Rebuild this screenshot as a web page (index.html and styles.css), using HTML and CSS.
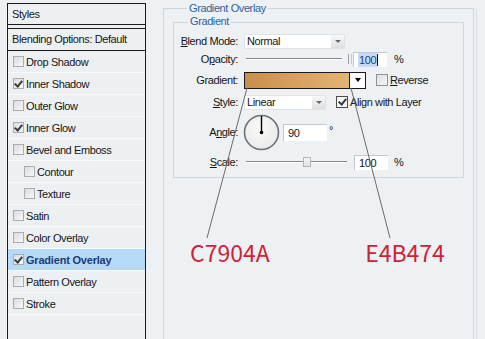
FILE: index.html
```html
<!DOCTYPE html>
<html lang="en">
<head>
    <meta charset="UTF-8">
    <title>Layer Style - Gradient Overlay</title>
    <link rel="stylesheet" href="styles.css">
</head>
<body>
    <aside class="styles-list">
        <div class="list-head">Styles</div>
        <div class="list-blend">Blending Options: Default</div>
        <div class="list-item"><span class="check"></span>Drop Shadow</div>
        <div class="list-item"><span class="check on"></span>Inner Shadow</div>
        <div class="list-item"><span class="check"></span>Outer Glow</div>
        <div class="list-item"><span class="check on"></span>Inner Glow</div>
        <div class="list-item"><span class="check"></span>Bevel and Emboss</div>
        <div class="list-item sub"><span class="check"></span>Contour</div>
        <div class="list-item sub"><span class="check"></span>Texture</div>
        <div class="list-item"><span class="check"></span>Satin</div>
        <div class="list-item"><span class="check"></span>Color Overlay</div>
        <div class="list-item active"><span class="check on"></span>Gradient Overlay</div>
        <div class="list-item"><span class="check"></span>Pattern Overlay</div>
        <div class="list-item"><span class="check"></span>Stroke</div>
    </aside>

    <main class="panel">
        <div class="group outer">
            <span class="legend">Gradient Overlay</span>
            <div class="group inner">
                <span class="legend">Gradient</span>
                <div class="rows">
                    <div class="row r-blend">
                        <span class="lbl"><u>B</u>lend Mode:</span>
                        <div class="select w-blend">Normal<span class="arrow"></span></div>
                    </div>
                    <div class="row r-opacity">
                        <span class="lbl">O<u>p</u>acity:</span>
                        <div class="track op"></div>
                        <div class="ticks"></div>
                        <div class="field op-field"><span class="sel">100</span><span class="caret"></span></div>
                        <span class="pct">%</span>
                    </div>
                    <div class="row r-gradient">
                        <span class="lbl">Gradient:</span>
                        <div class="swatch">
                            <div class="grad"></div>
                            <div class="swatch-arrow"></div>
                        </div>
                        <span class="cb rev"></span>
                        <span class="cb-label"><u>R</u>everse</span>
                    </div>
                    <div class="row r-style">
                        <span class="lbl"><u>S</u>tyle:</span>
                        <div class="select w-style">Linear<span class="arrow"></span></div>
                        <span class="cb align on"></span>
                        <span class="cb-label">Align with Layer</span>
                    </div>
                    <div class="row r-angle">
                        <span class="lbl">A<u>n</u>gle:</span>
                        <svg class="dial" width="37" height="37" viewBox="0 0 37 37">
                            <defs>
                                <radialGradient id="dialFill" cx="45%" cy="40%" r="60%">
                                    <stop offset="0" stop-color="#fbfbf8"/>
                                    <stop offset="1" stop-color="#e9ebea"/>
                                </radialGradient>
                            </defs>
                            <circle cx="18.5" cy="18.5" r="17" fill="url(#dialFill)" stroke="#6d7175" stroke-width="1.6"/>
                            <line x1="18.5" y1="18.5" x2="18.5" y2="2" stroke="#000" stroke-width="1.4"/>
                            <circle cx="18.5" cy="18.5" r="1.8" fill="#000"/>
                        </svg>
                        <div class="field angle-field">90</div>
                        <span class="deg">&deg;</span>
                    </div>
                    <div class="row r-scale">
                        <span class="lbl"><u>S</u>cale:</span>
                        <div class="track sc"><span class="thumb"></span></div>
                        <div class="field sc-field">100</div>
                        <span class="pct sc-pct">%</span>
                    </div>
                </div>
            </div>
            <div class="notes">
                <span class="note first">C7904A</span>
                <span class="note">E4B474</span>
            </div>
        </div>
    </main>

    <svg class="pointers" width="485" height="339" viewBox="0 0 485 339">
        <line x1="247" y1="88" x2="207" y2="238" stroke="#6a6a6a" stroke-width="1"/>
        <line x1="351" y1="88" x2="390" y2="238" stroke="#6a6a6a" stroke-width="1"/>
    </svg>
</body>
</html>
```

FILE: styles.css
```css
* {
    box-sizing: border-box;
}

body {
    margin: 0;
    width: 485px;
    height: 339px;
    overflow: hidden;
    position: relative;
    display: flex;
    align-items: flex-start;
    background: #eef1f4;
    font-family: "Liberation Sans", Arial, sans-serif;
    font-size: 11px;
    letter-spacing: -0.4px;
    color: #151515;
}

/* left column: list of effects */
.styles-list {
    flex-shrink: 0;
    width: 139px;
    height: 336px;
    margin: 3px 0 0 7px;
    border: 1px solid #1c1c1c;
    border-bottom: none;
    background: #edf0f3;
}

.list-head {
    height: 21px;
    padding-left: 4px;
    line-height: 20px;
    border-bottom: 1px solid #1c1c1c;
}

.list-blend {
    height: 23px;
    margin-top: 3px;
    padding-left: 4px;
    line-height: 21px;
    border-top: 1px solid #1c1c1c;
    border-bottom: 1px solid #1c1c1c;
}

.list-item {
    display: flex;
    align-items: center;
    height: 22px;
    padding-left: 5px;
    border-bottom: 1px solid #f8f9fa;
}

.list-item.sub {
    padding-left: 16px;
}

.list-item.active {
    background: #b6daf6;
    color: #1b3a78;
    font-weight: bold;
    letter-spacing: -0.2px;
}

.check {
    display: flex;
    align-items: center;
    justify-content: center;
    width: 11px;
    height: 11px;
    margin-right: 2px;
    border: 1px solid #a9adb1;
    background: linear-gradient(135deg, #dadcde, #f6f7f8);
}

.check.on::after,
.cb.on::after {
    content: "";
    width: 3px;
    height: 6px;
    margin-top: -2px;
    border-right: 2px solid #3a3a3a;
    border-bottom: 2px solid #3a3a3a;
    transform: rotate(40deg);
}

/* right column */
.panel {
    flex-shrink: 0;
    width: 314px;
    height: 331px;
    margin: 8px 0 0 17px;
    padding-right: 2px;
    border-right: 1px solid #dadee2;
}

.group {
    border: 1px solid #cfd5da;
}

.outer {
    height: 331px;
    padding: 0 9px;
    border-bottom: none;
}

.inner {
    margin-top: 7px;
    padding-bottom: 5px;
}

.legend {
    display: block;
    width: fit-content;
    margin: -7px 0 0 14px;
    padding: 0 2px;
    line-height: 13px;
    background: #eef1f4;
    color: #2c6397;
}

.inner .legend {
    margin-top: -8px;
}

.rows {
    margin-top: 4px;
}

.row {
    display: flex;
    align-items: center;
}

.r-blend { height: 18px; }
.r-opacity { height: 18px; }
.r-gradient { height: 24px; }
.r-style { height: 20px; }
.r-angle { height: 40px; }
.r-scale { height: 20px; }

.lbl {
    flex-shrink: 0;
    width: 64px;
    margin-right: 6px;
    text-align: right;
}

.select {
    display: flex;
    align-items: center;
    justify-content: space-between;
    height: 15px;
    padding-left: 2px;
    background: #fff;
    border: 1px solid #e1e4e7;
}

.w-blend { width: 101px; }
.w-style { width: 82px; }

.select .arrow {
    display: flex;
    align-items: center;
    justify-content: center;
    width: 13px;
    height: 13px;
    background: linear-gradient(#f8f8f8, #dcdfe2);
}

.select .arrow::after {
    content: "";
    border-top: 3px solid #666;
    border-left: 3px solid transparent;
    border-right: 3px solid transparent;
}

.track {
    display: flex;
    align-items: center;
    height: 10px;
    margin-left: 2px;
    background: linear-gradient(to bottom, transparent 4px, #868a8f 4px, #868a8f 5px, #fff 5px, #fff 6px, transparent 6px);
}

.track.op { width: 96px; }
.track.sc { width: 101px; }

.ticks {
    width: 4px;
    height: 10px;
    margin-left: 6px;
    border-left: 1px solid #9a9ea2;
    border-right: 1px solid #c3c7cb;
}

.thumb {
    width: 8px;
    height: 10px;
    margin-left: 57px;
    border: 1px solid #b3b7bb;
    background: linear-gradient(#f4f5f6, #dfe2e5);
}

.field {
    height: 15px;
    padding-left: 4px;
    line-height: 14px;
    background: #fff;
    border-top: 1px solid #c4c8cc;
    border-left: 1px solid #c4c8cc;
}

.op-field {
    display: flex;
    align-items: center;
    width: 34px;
    margin-left: 1px;
}

.sel {
    background: #c5dbf3;
    color: #1a3c8a;
    padding: 0 1px;
}

.caret {
    width: 1px;
    height: 12px;
    background: #000;
}

.pct {
    margin-left: 7px;
}

.sc-field {
    width: 34px;
    margin-left: 7px;
}

.sc-pct {
    margin-left: 6px;
}

.swatch {
    display: flex;
    width: 122px;
    height: 17px;
    border: 1px solid #1a1a1a;
}

.grad {
    flex: 1;
    background: linear-gradient(to right, #c7904a, #e4b474);
}

.swatch-arrow {
    display: flex;
    align-items: center;
    justify-content: center;
    width: 16px;
    background: #fff;
    border-left: 1px solid #1a1a1a;
}

.swatch-arrow::after {
    content: "";
    border-top: 4px solid #000;
    border-left: 3.5px solid transparent;
    border-right: 3.5px solid transparent;
}

.cb {
    display: flex;
    align-items: center;
    justify-content: center;
    flex-shrink: 0;
    width: 12px;
    height: 12px;
    margin-left: 10px;
    border: 1px solid #8e9296;
    background: linear-gradient(135deg, #dcdee0, #f6f7f8);
}

.cb.align {
    border-color: #4a4a4a;
    background: #f4f5f6;
}

.cb-label {
    margin-left: 2px;
}

.dial {
    margin-left: -1px;
}

.angle-field {
    width: 44px;
    height: 17px;
    margin-left: 3px;
    line-height: 16px;
}

.deg {
    align-self: flex-start;
    margin: 12px 0 0 2px;
}

/* colour notes under the gradient group */
.notes {
    margin-top: 62px;
    padding-left: 17px;
    font-family: "Noto Sans CJK SC", "Liberation Sans", sans-serif;
    font-size: 23px;
    line-height: 24px;
    letter-spacing: 0;
    color: #cc2434;
}

.note {
    display: inline-block;
}

.note.first {
    width: 170px;
}

.pointers {
    position: absolute;
    top: 0;
    left: 0;
    pointer-events: none;
}
```
